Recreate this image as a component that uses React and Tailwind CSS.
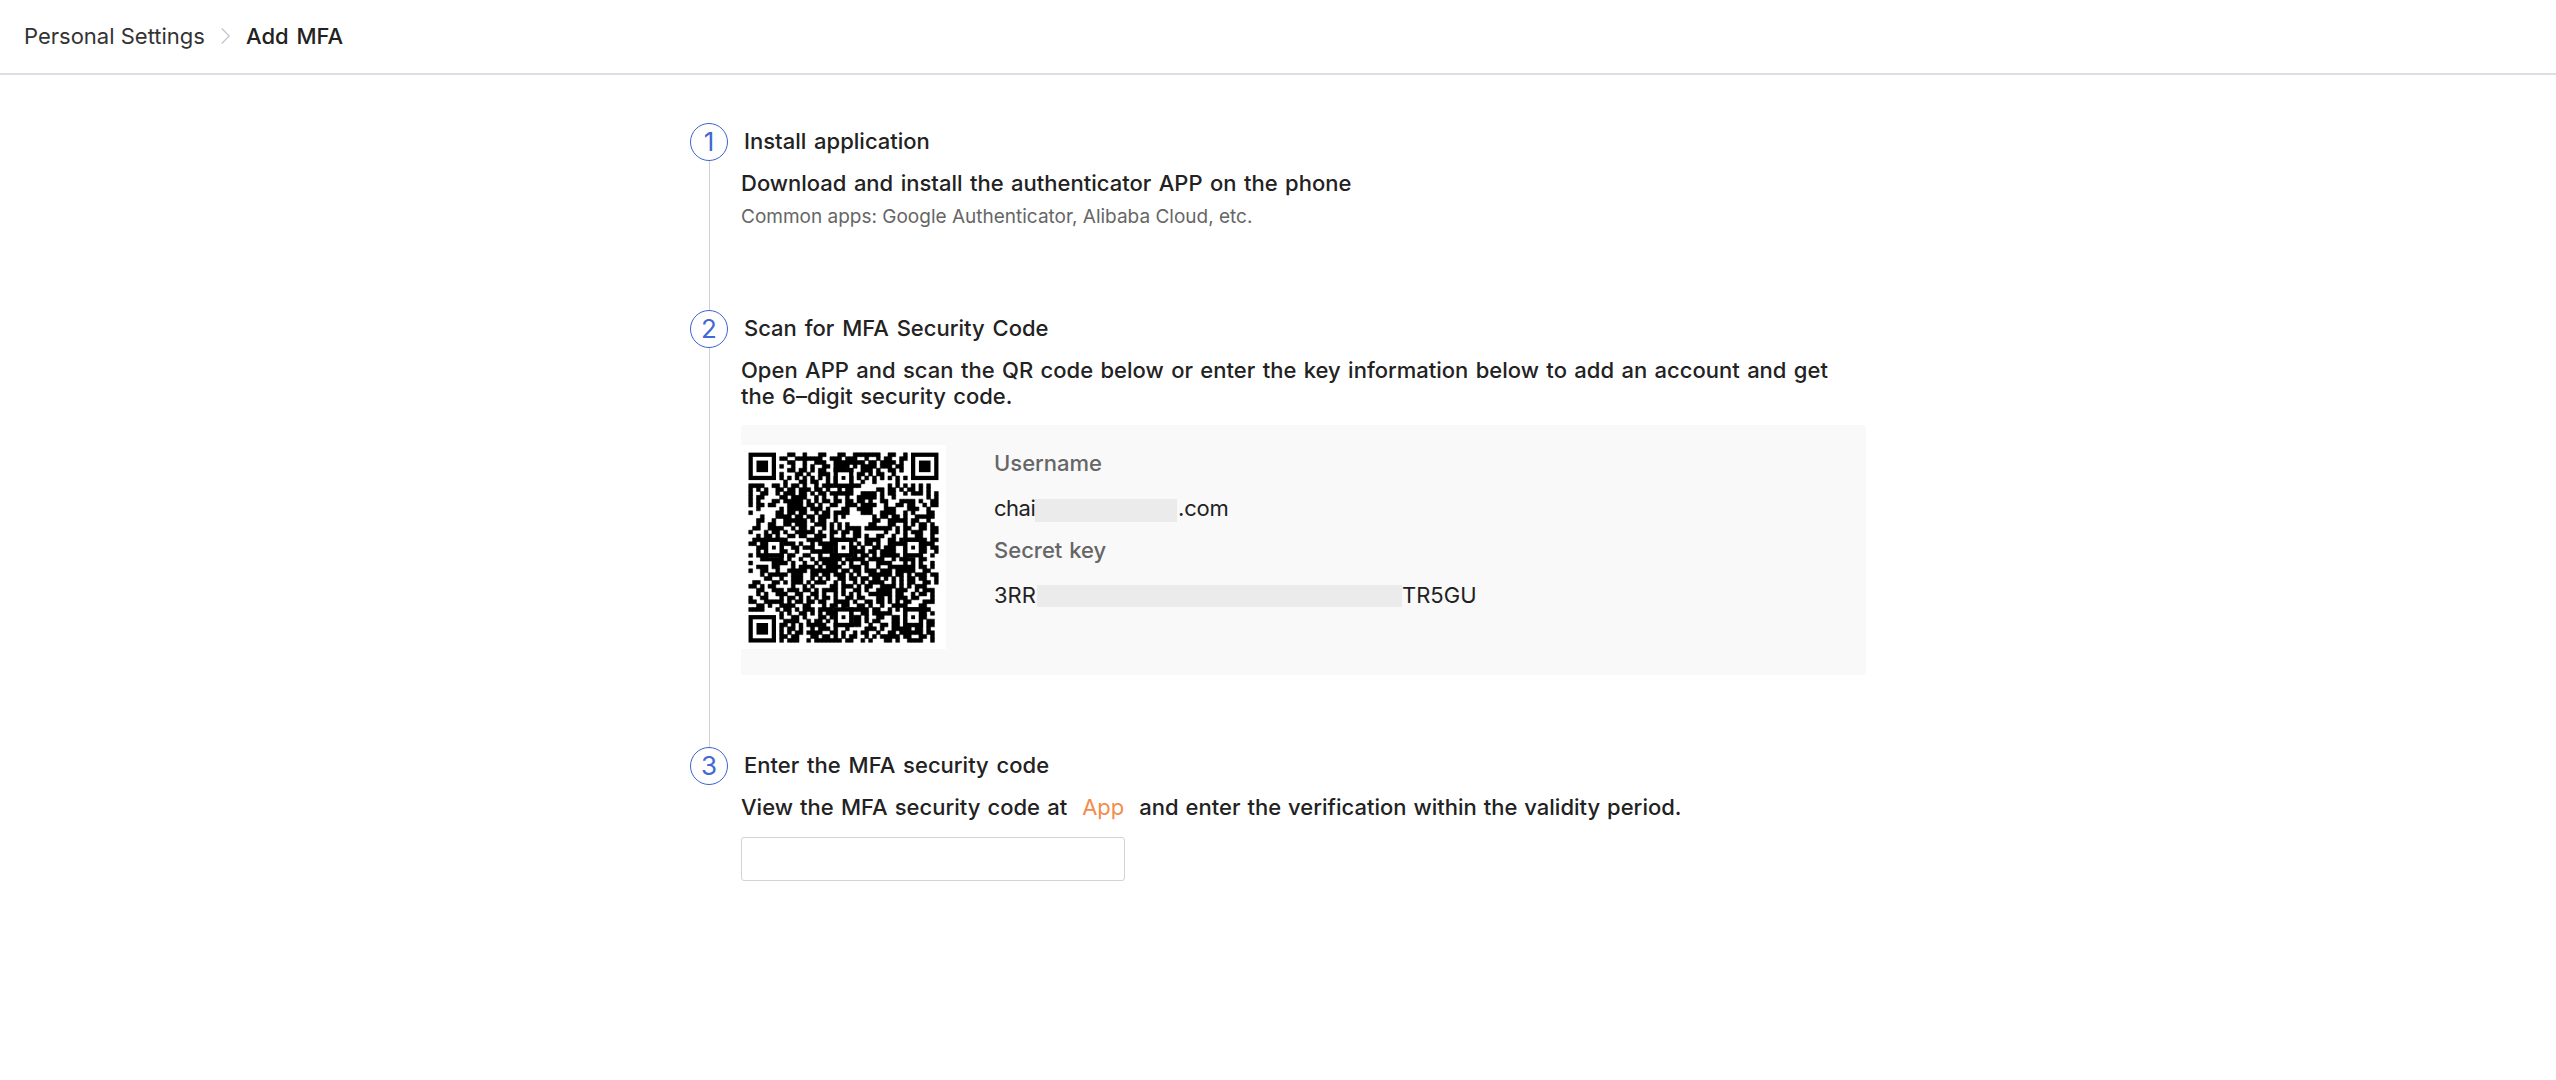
const QR_SIZE = 49;

// Data modules, finder and alignment patterns are drawn on top of them
const QR_ROWS = [
  '..........##..#...##...##..#######..##..#........',
  '........##..#######..###.###..#..#.##..##........',
  '..........##..#..###..########.##.####.#.........',
  '........#..#..#.#..##.####.#.####.###.##.........',
  '..........##.##.#.##..###.#..###.#..##.#.........',
  '........#...##.#..###..#....##.#.##..#...........',
  '........#.#.#.#.#.#.#.#.#.#.#.#.#.#.#.#.#........',
  '.........#...##.##..#.#...#..#..#.....#..........',
  '####..##.#.##.#..#.###.######.......#.#.#.#.#.#..',
  '#.#.#..##.##.###.##.#..#.##......##.##.#.##.#.#..',
  '#..##..#.###.##.#.##.######..####.#.##..#.###.#.#',
  '#.##....##.####..#.#..#..#..#####.#..#........#.#',
  '#.#...##.#####.#.#.##.##.##.##.#..##...####.#..##',
  '#.##.##...####.##.#..##..###.####..#..##.##..#.##',
  '..#.....#.#####.###.#...##..####...###...###..#..',
  '#......##.##.##..#.##.####...###..####..#.#...##.',
  '...#...####.##.##.###.#.#.......#.##.##.#..#####.',
  '..##..#..######.#.##..#.........##..#####.##..#..',
  '..#..##..##.###..###.#.#.#.....##...##..#.#.##.#.',
  '.##..####..#.##.#..#.#.#.####.#######.#.##..##.##',
  '#...#.##.#..#####.#..##.##.##......#..#.#.###..##',
  '..#.##.#..##.##..###.#..#..##.#..##..#..#..##..#.',
  '.####..###.....####..##..#.#..####..##.#.##.##.##',
  '##.#####.###.#..#.#####.##..#.##.#..#####.######.',
  '..##....#..##.###..###.#####.#..##.###..#....#.##',
  '..#.#...##..#...######.#...###.##.####..#...##..#',
  '#.###...#.##..##..#..###...#.##.#.#####.#...#..#.',
  '...######.#..#..#.######.#####.####..#.####.##...',
  '#.....####.#..#..#.####.#.#..##..####...#.#.#..#.',
  '..###.##...#.####.#.####..###.#..#..#######.##.#.',
  '#..##..#..#####.#######.##.##.###.###.#####..##..',
  '...#.#####.###..##.##.###.#.#..######.##.#.###.##',
  '....##..#..###..#.#.#..##.##.##.##.#.#.#.##.##..#',
  '.##...##.#.###.#.###..#.#..#.#.####..#.#.##..##.#',
  '##.#.##....#..#.#....##.###.#.##..####.#.#.###...',
  '..##..###.###.##.#.####.#..##.#..####.###..#.###.',
  '..#.#..###..##..##.#..#.#.#.#..######.##..#.##.#.',
  '#..##...#.##.#.#.#.##.#..##.##...##.#.###.##...#.',
  '##..#####.#.##.##.##..####.#..##.##.#.#.##...###.',
  '..##.#..####..##...#.##.##..##.#..#..####...##...',
  '####...#.##.#.###.####..#.#####.##..#.#.#######..',
  '........#.#..##.#.#.#####.#..##.#####...#...##.#.',
  '........#..##.#...##.#..#..##.#..##..##.#.#.##...',
  '.........####..#.##.#..#...##.#.##...##.#...#.##.',
  '........##.#.#.#####..#######..#..##.##.#####.##.',
  '........#.##.#..#.###.#..#....###.#..#####.##.#..',
  '........#.#.##.####..##.#..#.##..#..##.######.##.',
  '........##.##...##.##.#.#.##..#.#.#####.##..##.#.',
  '........#.###..#.#######.##..#.#...##.#..####..#.',
];

const FINDERS = [[0, 0], [42, 0], [0, 42]];
const ALIGNMENTS = [[22, 4], [4, 22], [22, 22], [40, 22], [22, 40], [40, 40]];

const QrCode = () => {
  const cells = [];
  QR_ROWS.forEach((row, y) => {
    for (let x = 0; x < QR_SIZE; x++) {
      if (row[x] === '#') cells.push(`M${x} ${y}h1v1h-1z`);
    }
  });

  return (
    <svg className="w-[205px] h-[204px] bg-white shrink-0" viewBox="-2 -2 53 52.7">
      {/* thin stroke closes the seams between neighbouring modules */}
      <path d={cells.join('')} fill="#000" stroke="#000" strokeWidth="0.14" />
      {FINDERS.map(([x, y]) => (
        <g key={`${x}-${y}`}>
          <rect x={x - 0.5} y={y - 0.5} width="8" height="8" fill="#fff" />
          <rect x={x + 0.5} y={y + 0.5} width="6" height="6" fill="none" stroke="#000" strokeWidth="1.1" />
          <rect x={x + 2} y={y + 2} width="3" height="3" fill="#000" />
        </g>
      ))}
      {ALIGNMENTS.map(([x, y]) => (
        <g key={`${x}-${y}`}>
          <rect x={x + 0.5} y={y + 0.5} width="4" height="4" fill="#fff" stroke="#000" strokeWidth="1.1" />
          <rect x={x + 2} y={y + 2} width="1" height="1" fill="#000" />
        </g>
      ))}
    </svg>
  );
};

const Step = ({ number, title, className = '', last = false, children }) => (
  <div className={`flex ${className}`}>
    <div className="flex flex-col items-center w-[38px] shrink-0">
      <div className="w-[38px] h-[38px] shrink-0 rounded-full border border-[#3c62d2] flex items-center justify-center text-[26px] leading-none text-[#4468d3]">
        {number}
      </div>
      {!last && <div className="w-px flex-1 bg-[#cfcfd5]"></div>}
    </div>
    <div className="flex-1 pl-[13px]">
      <h3 className="pl-[3px] leading-[36px] font-medium [word-spacing:2px]">{title}</h3>
      <div className="mt-[11px]">{children}</div>
    </div>
  </div>
);

const App = () => {
  return (
    <div className="min-h-screen bg-white font-['Inter',sans-serif] text-[22px] text-[#222]">
      {/* Breadcrumb */}
      <header className="flex items-center h-[75px] pl-6 pb-px border-b-2 border-[#dedfe4]">
        <span className="w-[180px] whitespace-nowrap text-[#333]">Personal Settings</span>
        <svg className="ml-[17px] w-[9px] h-4" viewBox="0 0 9 16" fill="none" stroke="#c3c4d0" strokeWidth="1.3">
          <path d="M0.8 0.5L8.2 8L0.8 15.5" />
        </svg>
        <span className="ml-4 font-medium [word-spacing:2px]">Add MFA</span>
      </header>

      <main className="w-[1176px] mx-auto pt-12">
        <Step number={1} title="Install application" className="h-[187px]">
          <p className="leading-[26px] font-medium [word-spacing:1.6px]">
            Download and install the authenticator APP on the phone
          </p>
          <p className="mt-[9px] text-[19px] leading-6 text-[#666]">
            Common apps: Google Authenticator, Alibaba Cloud, etc.
          </p>
        </Step>

        <Step number={2} title="Scan for MFA Security Code" className="h-[437px]">
          <p className="leading-[26px] font-medium [word-spacing:1.55px]">
            Open APP and scan the QR code below or enter the key information below to add an account and get
            <br />
            the 6–digit security code.
          </p>
          <div className="mt-4 h-[250px] pt-5 flex items-start bg-[#f9f9f9] rounded-[3px]">
            <QrCode />
            <div className="pl-12 pt-[5px] leading-[26px]">
              <div className="font-medium text-[#666]">Username</div>
              <div className="mt-[19px] flex items-start">
                <span className="w-[41px] tracking-[-0.5px]">chai</span>
                <span className="mt-1 mr-px w-[142px] h-[23px] bg-[#ebebeb]"></span>
                <span className="tracking-[-0.2px]">.com</span>
              </div>
              <div className="mt-[15px] font-medium text-[#666] [word-spacing:1px]">Secret key</div>
              <div className="mt-[19px] flex items-start">
                <span className="w-[43px]">3RR</span>
                <span className="mt-[3px] w-[365px] h-[22px] bg-[#ebebeb]"></span>
                <span>TR5GU</span>
              </div>
            </div>
          </div>
        </Step>

        <Step number={3} title="Enter the MFA security code" last>
          <p className="flex gap-[15px] leading-[26px] font-medium">
            <span className="[word-spacing:1.3px]">View the MFA security code at</span>
            <span className="font-normal text-[#f28c4b]">App</span>
            <span className="[word-spacing:1.1px]">and enter the verification within the validity period.</span>
          </p>
          <input
            type="text"
            className="block mt-[17px] w-[384px] h-11 px-3 border border-[#d2d3d6] rounded-[3px] outline-none"
          />
        </Step>
      </main>
    </div>
  );
};

export default App;
